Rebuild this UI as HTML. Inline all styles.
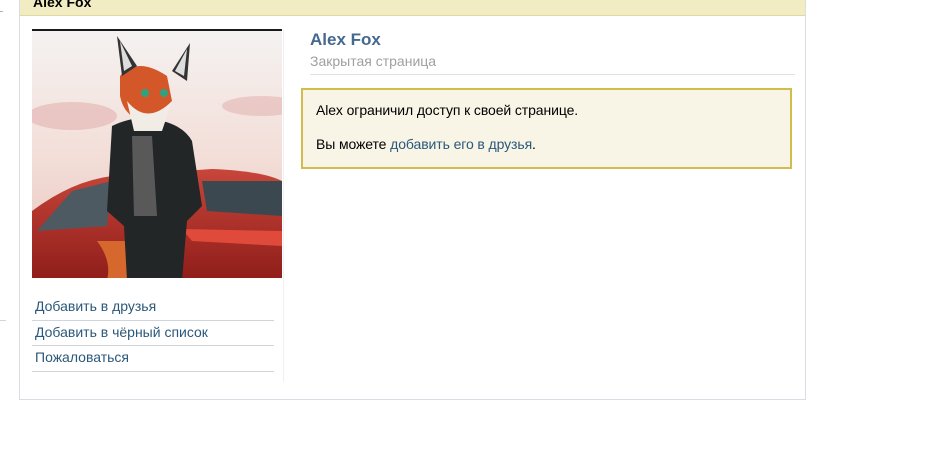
<!DOCTYPE html>
<html><head><meta charset="utf-8"><style>
*{margin:0;padding:0;box-sizing:border-box}
body{width:940px;height:450px;background:#fff;font-family:Tahoma,"Liberation Sans","DejaVu Sans",sans-serif;font-size:13px;position:relative;overflow:hidden}
.wrap{position:absolute;left:19px;top:-1px;width:787px;height:401px;border:1px solid #d8dde4;border-top:none;background:#fff}
.hd{height:17px;background:#f2ecc5;border-bottom:1px solid #e2d79c;font-weight:bold;font-size:14px;color:#000;padding-left:13px;line-height:6px;overflow:hidden}
.photo{position:absolute;left:12px;top:30px;width:250px;height:249px;border-top:2px solid #1a1a1a;overflow:hidden}
.menu{position:absolute;left:12px;top:296px;width:242px}
.menu div{height:25.5px;border-bottom:1px solid #d0d5da;color:#2b587a;padding-left:3px;line-height:22px;font-size:14px}
.vl{position:absolute;left:263px;top:30px;width:1px;height:353px;background:#eef0f2}
.name{position:absolute;left:290px;top:31px;font-weight:bold;font-size:17px;color:#45688e}
.sub{position:absolute;left:290px;top:54px;color:#a0a0a0;font-size:14px}
.line{position:absolute;left:290px;top:75px;width:485px;height:1px;background:#e0e3e6}
.box{position:absolute;left:281px;top:89px;width:491px;height:81px;background:#f8f5e6;border:2px solid #d4bb4e;padding:12px 0 0 13px;font-size:14px;color:#000;line-height:16px;letter-spacing:-0.1px}
.box p+p{margin-top:18px}
.box a{color:#2b587a;text-decoration:none}
.tick{position:absolute;left:0;background:#d0d5da;height:1px;width:6px}
</style></head><body>
<div class="tick" style="top:11px;width:3px;background:#a8b4c2"></div>
<div class="tick" style="top:320px"></div>
<div class="wrap">
<div class="hd">Alex Fox</div>
<div class="photo">
<svg width="250" height="249" viewBox="0 0 250 249">
<defs><linearGradient id="s" x1="0" y1="0" x2="0" y2="1"><stop offset="0" stop-color="#f4f2f1"/><stop offset=".5" stop-color="#f3ded8"/><stop offset="1" stop-color="#e9c3bd"/></linearGradient>
<linearGradient id="c" x1="0" y1="0" x2="0" y2="1"><stop offset="0" stop-color="#c8463a"/><stop offset="1" stop-color="#8f1d1a"/></linearGradient></defs>
<rect width="250" height="249" fill="url(#s)"/>
<ellipse cx="40" cy="85" rx="45" ry="14" fill="#e4b9b6" opacity=".7"/>
<ellipse cx="230" cy="75" rx="40" ry="10" fill="#e2b5b3" opacity=".6"/>
<path d="M0 180 Q40 150 80 145 L180 138 Q230 140 250 150 L250 249 L0 249Z" fill="url(#c)"/>
<path d="M5 200 L40 160 L80 150 L75 195Z" fill="#4d5a62"/>
<path d="M170 150 L250 150 L250 185 L175 180Z" fill="#3b4850"/>
<path d="M150 198 L250 200 L250 215 L160 210Z" fill="#e04a3a"/>
<path d="M65 210 Q80 230 75 249 L105 249 Q95 230 95 210Z" fill="#d6672d"/>
<path d="M80 95 Q100 85 120 88 Q150 92 160 110 L170 175 L155 190 L150 249 L95 249 L92 195 L75 180Z" fill="#232627"/>
<path d="M100 105 L120 105 L125 185 L102 185Z" fill="#595959"/>
<path d="M88 45 Q105 25 135 45 L140 70 Q125 90 110 90 Q92 85 88 65Z" fill="#d4572a"/>
<path d="M95 70 Q115 95 140 70 L130 100 L102 100Z" fill="#f1ece6"/>
<path d="M85 5 L105 35 L90 45Z" fill="#333"/><path d="M158 12 L140 40 L155 50Z" fill="#333"/>
<path d="M88 10 L100 35 L92 40Z" fill="#ddd"/><path d="M155 18 L143 40 L152 45Z" fill="#ddd"/>
<circle cx="113" cy="62" r="4" fill="#2fa37f"/><circle cx="132" cy="62" r="4" fill="#2fa37f"/>
</svg>
</div>
<div class="vl"></div>
<div class="menu"><div>Добавить в друзья</div><div>Добавить в чёрный список</div><div>Пожаловаться</div></div>
<div class="name">Alex Fox</div>
<div class="sub">Закрытая страница</div>
<div class="line"></div>
<div class="box"><p>Alex ограничил доступ к своей странице.</p><p>Вы можете <a>добавить его в друзья</a>.</p></div>
</div>
</body></html>
